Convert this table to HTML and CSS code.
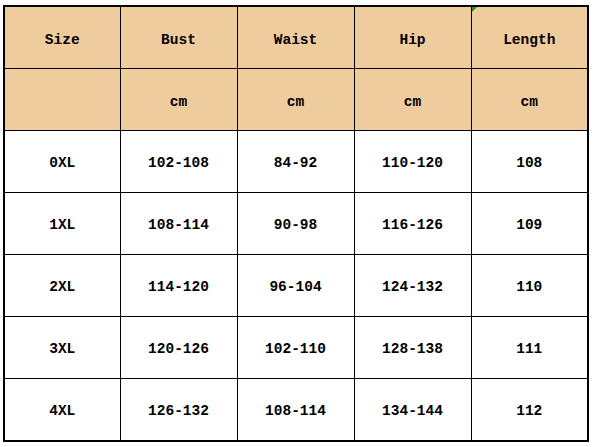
FILE: index.html
```html
<!DOCTYPE html>
<html>
<head>
<meta charset="utf-8">
<link rel="stylesheet" href="styles.css">
</head>
<body>
<table class="size-table">
  <colgroup>
    <col class="c1"><col class="c2"><col class="c3"><col class="c4"><col class="c5">
  </colgroup>
  <tr class="head">
    <th>Size</th><th>Bust</th><th>Waist</th><th>Hip</th><th class="marked">Length</th>
  </tr>
  <tr class="head unit">
    <th></th><th>cm</th><th>cm</th><th>cm</th><th>cm</th>
  </tr>
  <tr><td>0XL</td><td>102-108</td><td>84-92</td><td>110-120</td><td>108</td></tr>
  <tr><td>1XL</td><td>108-114</td><td>90-98</td><td>116-126</td><td>109</td></tr>
  <tr><td>2XL</td><td>114-120</td><td>96-104</td><td>124-132</td><td>110</td></tr>
  <tr><td>3XL</td><td>120-126</td><td>102-110</td><td>128-138</td><td>111</td></tr>
  <tr><td>4XL</td><td>126-132</td><td>108-114</td><td>134-144</td><td>112</td></tr>
</table>
</body>
</html>
```
FILE: styles.css
```css
html, body {
  margin: 0;
  padding: 0;
  background: #ffffff;
}
body {
  padding: 5px 0 0 3px;
}
.size-table {
  border-collapse: collapse;
  table-layout: fixed;
  width: 585px;
  border: 2px solid #000;
  font-family: "Liberation Mono", "DejaVu Sans Mono", monospace;
  font-size: 14.5px;
  color: #000;
}
.c1 { width: 116px; }
.c2 { width: 117px; }
.c3 { width: 117px; }
.c4 { width: 117px; }
.c5 { width: 117px; }
.size-table th,
.size-table td {
  border: 1px solid #000;
  padding: 0;
  text-align: center;
  vertical-align: middle;
}
.size-table th {
  background: #efcc9e;
  font-weight: bold;
  padding-top: 5px;
  height: 56px;
}
.size-table td {
  font-weight: bold;
  background: #fff;
  padding-top: 3px;
  height: 58px;
}
.marked {
  position: relative;
}
.marked::before {
  content: "";
  position: absolute;
  left: 0;
  top: 0;
  border-top: 5px solid #2e8b2e;
  border-right: 5px solid transparent;
}
```
